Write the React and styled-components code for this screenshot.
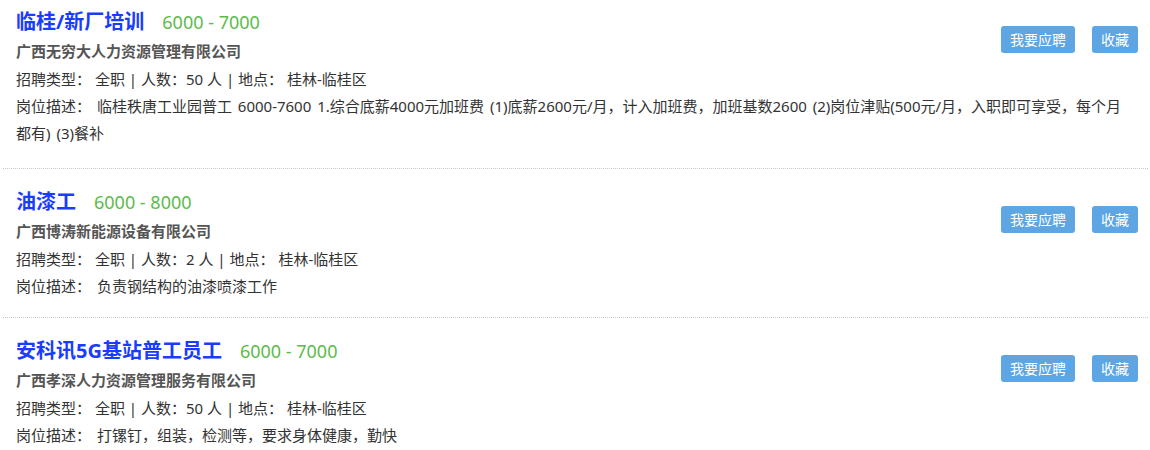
import React from "react";
import styled, { createGlobalStyle } from "styled-components";

const Global = createGlobalStyle`
  html, body {
    margin: 0;
    padding: 0;
    background: #fff;
    overflow: hidden;
  }
  body {
    font-family: "Noto Sans", "Noto Sans CJK SC", sans-serif;
    color: #333;
  }
`;

const List = styled.div`
  margin: -11px 2px 0 3px;
`;

const Item = styled.div`
  padding: 18px 10px 17px 13px;
  border-bottom: 1px dotted #c8c8c8;
  &:first-child {
    padding-bottom: 21px;
  }
`;

const Top = styled.div`
  display: flex;
  justify-content: space-between;
  align-items: flex-start;
`;

const Info = styled.div`
  display: flex;
  flex-direction: column;
`;

const TitleRow = styled.div`
  display: flex;
  align-items: baseline;
  height: 30px;
  line-height: 30px;
`;

const Title = styled.a`
  font-size: 20px;
  font-weight: 700;
  color: #1a3cff;
  text-decoration: none;
`;

const Salary = styled.span`
  margin-left: 18px;
  font-size: 18px;
  color: #5bbb4b;
`;

const Company = styled.div`
  font-size: 15px;
  font-weight: 700;
  color: #555;
  line-height: 28px;
`;

const Line = styled.div`
  font-size: 15px;
  color: #333;
  line-height: 28px;
`;

const Desc = styled.div`
  font-size: 15px;
  color: #333;
  line-height: 27px;
  word-spacing: 2px;
  padding-right: 4px;
`;

const Actions = styled.div`
  display: flex;
  gap: 17px;
  margin-top: 19px;
`;

const Button = styled.button`
  height: 27px;
  padding: 0 9px;
  border: none;
  border-radius: 3px;
  background: #5ea6e3;
  color: #fff;
  font-family: "Noto Sans CJK SC", sans-serif;
  font-size: 14px;
  line-height: 27px;
  cursor: pointer;
`;

const jobs = [
  {
    title: "临桂/新厂培训",
    salary: "6000 - 7000",
    company: "广西无穷大人力资源管理有限公司",
    count: "50",
    desc:
      "临桂秩唐工业园普工 6000-7600 1.综合底薪4000元加班费 (1)底薪2600元/月，计入加班费，加班基数2600 (2)岗位津贴(500元/月，入职即可享受，每个月都有) (3)餐补",
  },
  {
    title: "油漆工",
    salary: "6000 - 8000",
    company: "广西博涛新能源设备有限公司",
    count: "2",
    desc: "负责钢结构的油漆喷漆工作",
  },
  {
    title: "安科讯5G基站普工员工",
    salary: "6000 - 7000",
    company: "广西孝深人力资源管理服务有限公司",
    count: "50",
    desc: "打镙钉，组装，检测等，要求身体健康，勤快",
  },
];

function JobItem({ job }) {
  return (
    <Item>
      <Top>
        <Info>
          <TitleRow>
            <Title href="#">{job.title}</Title>
            <Salary>{job.salary}</Salary>
          </TitleRow>
          <Company>{job.company}</Company>
          <Line>
            招聘类型： 全职 | 人数：{job.count} 人 | 地点： 桂林-临桂区
          </Line>
        </Info>
        <Actions>
          <Button>我要应聘</Button>
          <Button>收藏</Button>
        </Actions>
      </Top>
      <Desc>岗位描述： {job.desc}</Desc>
    </Item>
  );
}

export default function App() {
  return (
    <>
      <Global />
      <List>
        {jobs.map((j, i) => (
          <JobItem key={i} job={j} />
        ))}
      </List>
    </>
  );
}
